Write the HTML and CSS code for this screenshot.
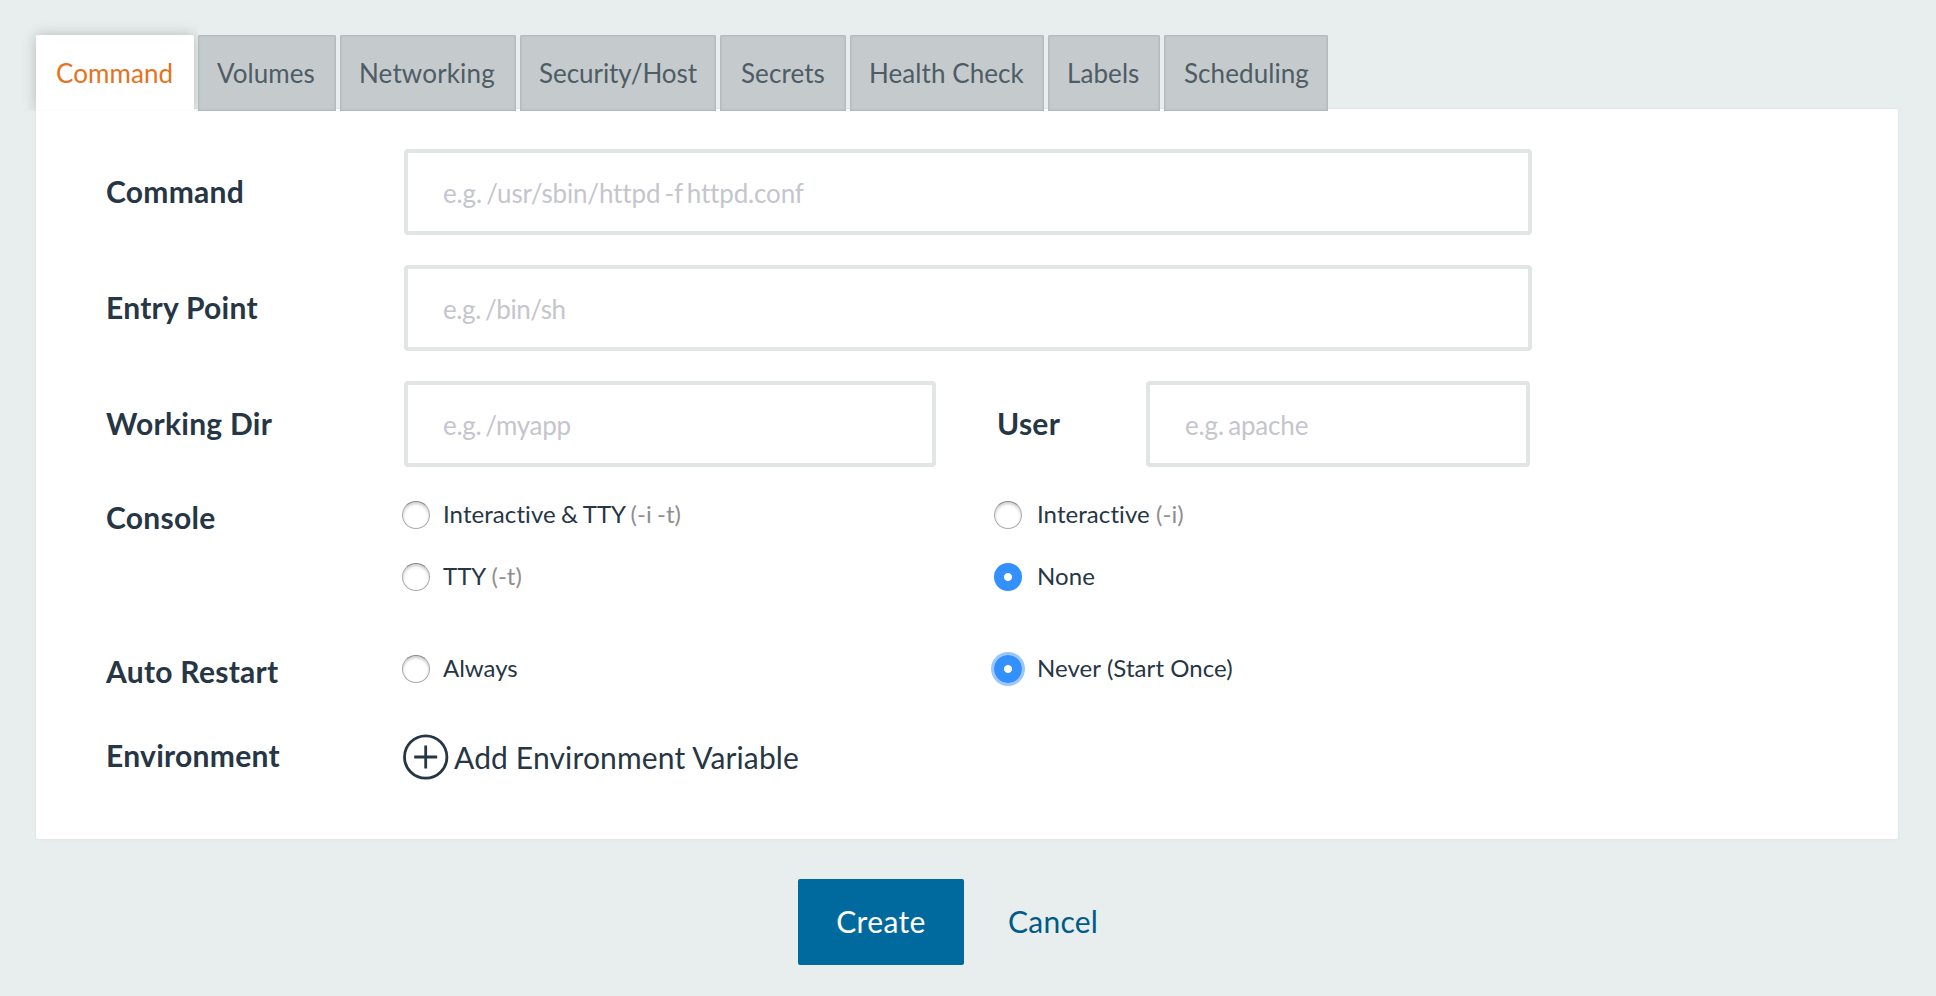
FILE: index.html
```html
<!DOCTYPE html>
<html lang="en">
<head>
<meta charset="utf-8">
<title>Create Container</title>
<link rel="stylesheet" href="styles.css">
</head>
<body>
<nav class="tabs">
  <a class="tab tab-active w-command">Command</a>
  <a class="tab w-volumes">Volumes</a>
  <a class="tab w-networking">Networking</a>
  <a class="tab w-security">Security/Host</a>
  <a class="tab w-secrets">Secrets</a>
  <a class="tab w-health">Health Check</a>
  <a class="tab w-labels">Labels</a>
  <a class="tab w-scheduling">Scheduling</a>
</nav>
<main class="panel">
  <div class="row">
    <label class="label">Command</label>
    <input class="input input-full" type="text" placeholder="e.g. /usr/sbin/httpd -f httpd.conf">
  </div>
  <div class="row">
    <label class="label">Entry Point</label>
    <input class="input input-full input-entry" type="text" placeholder="e.g. /bin/sh">
  </div>
  <div class="row">
    <label class="label">Working Dir</label>
    <input class="input input-dir" type="text" placeholder="e.g. /myapp">
    <label class="label label-user">User</label>
    <input class="input input-user" type="text" placeholder="e.g. apache">
  </div>
  <div class="row row-console">
    <div class="label">Console</div>
    <div class="options">
      <label class="option"><input class="radio" type="radio" name="console"><span class="tight">Interactive &amp; TTY <span class="flag">(-i -t)</span></span></label>
      <label class="option"><input class="radio" type="radio" name="console"><span>Interactive <span class="flag">(-i)</span></span></label>
      <label class="option"><input class="radio" type="radio" name="console"><span>TTY <span class="flag">(-t)</span></span></label>
      <label class="option"><input class="radio" type="radio" name="console" checked><span>None</span></label>
    </div>
  </div>
  <div class="row row-restart">
    <div class="label">Auto Restart</div>
    <div class="options">
      <label class="option"><input class="radio" type="radio" name="restart"><span>Always</span></label>
      <label class="option"><input class="radio radio-focus" type="radio" name="restart" checked><span>Never (Start Once)</span></label>
    </div>
  </div>
  <div class="row row-env">
    <div class="label">Environment</div>
    <a class="add">
      <svg class="add-icon" width="46" height="46" viewBox="0 0 46 46" fill="none" stroke="currentColor">
        <circle cx="22.7" cy="23" r="21.2" stroke-width="2.8"/>
        <path d="M11.2 23h23M22.7 11.5v23" stroke-width="2.8"/>
      </svg>
      <span>Add Environment Variable</span>
    </a>
  </div>
</main>
<footer class="actions">
  <button class="create" type="button">Create</button>
  <a class="cancel">Cancel</a>
</footer>
</body>
</html>
```

FILE: styles.css
```css
* { box-sizing: border-box; }

body {
  margin: 0;
  padding: 35px 38px 0 36px;
  height: 996px;
  overflow: hidden;
  background: #e8eeee;
  color: #263645;
  font-family: Lato, "Liberation Sans", sans-serif;
  font-variant-ligatures: none;
}

.tabs {
  display: flex;
  gap: 4px;
  height: 76px;
  margin-bottom: -2px;
  position: relative;
  z-index: 1;
}

.tab {
  height: 76px;
  padding-left: 19px;
  line-height: 76px;
  white-space: nowrap;
  font-size: 26px;
  letter-spacing: 0.08px;
  color: #4e5c66;
  background: #c5cacc;
  border-radius: 2px 2px 0 0;
  box-shadow: inset 0 0 2px 1px #aeb6b8;
}

.tab-active {
  color: #e8711c;
  background: linear-gradient(#fff 75px, #fcfcfc 75px);
  box-shadow: 0 0 14px rgba(0, 0, 0, 0.22);
  clip-path: inset(-14px -4px 0 -14px);
}

.w-command { width: 158px; padding-left: 20px; }
.w-volumes { width: 138px; }
.w-networking { width: 176px; letter-spacing: 0.15px; }
.w-security { width: 196px; letter-spacing: -0.05px; }
.w-secrets { width: 126px; padding-left: 21px; }
.w-health { width: 194px; }
.w-labels { width: 112px; }
.w-scheduling { width: 164px; padding-left: 20px; }

.panel {
  height: 730px;
  padding: 40px 0 0 70px;
  background: #fff;
  border-radius: 2px;
  box-shadow: 0 0 2px 1px rgba(0, 0, 0, 0.035);
}

.row {
  display: flex;
  align-items: center;
  height: 86px;
  margin-bottom: 30px;
}

.label {
  width: 298px;
  flex: none;
  padding-bottom: 2px;
  font-size: 30px;
  line-height: 36px;
  font-weight: 700;
  letter-spacing: 0.27px;
  white-space: nowrap;
}

.label-user { width: 149px; margin-left: 61px; }

.input {
  height: 86px;
  padding: 2px 35px 0;
  border: 4px solid #e1e5e6;
  border-radius: 4px;
  background: #fff;
  color: #263645;
  font: 26px Lato, "Liberation Sans", sans-serif;
  font-variant-ligatures: none;
  letter-spacing: -0.15px;
  word-spacing: -2.3px;
  outline: none;
}

.input::placeholder { color: #c5c5cd; opacity: 1; }
.input-full { width: 1128px; }
.input-entry { letter-spacing: -0.4px; }
.input-dir { width: 532px; letter-spacing: -0.32px; }
.input-user { width: 384px; }

.row-console,
.row-restart { align-items: flex-start; }
.row-console { height: 124px; }
.row-console .label { padding-top: 2px; }
.row-restart { height: 62px; margin-bottom: 21px; }
.row-restart .label { padding-top: 2px; }

.options {
  display: grid;
  grid-template-columns: 592px 500px;
  margin-left: -2px;
  row-gap: 26px;
}

.option {
  display: flex;
  align-items: center;
  gap: 13px;
  height: 36px;
  font-size: 24px;
  line-height: 30px;
  white-space: nowrap;
}

.option:nth-child(even) { gap: 15px; letter-spacing: 0.07px; }
.option > span { margin-top: -3px; }
.tight { letter-spacing: 0.07px; word-spacing: -1px; }
.flag { color: #8f8f8f; }

.radio {
  appearance: none;
  flex: none;
  width: 28px;
  height: 28px;
  margin: 0;
  border: 1px solid #aaa;
  border-top-color: #888;
  border-radius: 50%;
  background: #fff;
  box-shadow: inset 0 2px 3px rgba(0, 0, 0, 0.2);
}

.radio:checked {
  border: 0;
  background: radial-gradient(circle, #fff 3.6px, #3390ff 4.4px);
  box-shadow: none;
}

.radio-focus:checked { box-shadow: 0 0 0 3px #9bc7fc; }

.row-env { height: 46px; margin: 0; }
.row-env .label { padding-bottom: 4px; }

.add {
  display: flex;
  align-items: center;
  margin-left: -1px;
  gap: 5px;
  font-size: 30px;
  line-height: 36px;
  letter-spacing: 0.15px;
}

.add-icon { display: block; }

.actions {
  display: flex;
  align-items: center;
  padding: 40px 0 0 762px;
  font-size: 30px;
}

.create {
  width: 166px;
  height: 86px;
  padding: 0 0 2px;
  border: 0;
  border-radius: 2px;
  background: #006a9e;
  color: #fff;
  font: 30px Lato, "Liberation Sans", sans-serif;
  letter-spacing: 0.4px;
}

.cancel {
  margin-left: 44px;
  padding-bottom: 2px;
  color: #005a87;
  letter-spacing: 0.25px;
}
```
